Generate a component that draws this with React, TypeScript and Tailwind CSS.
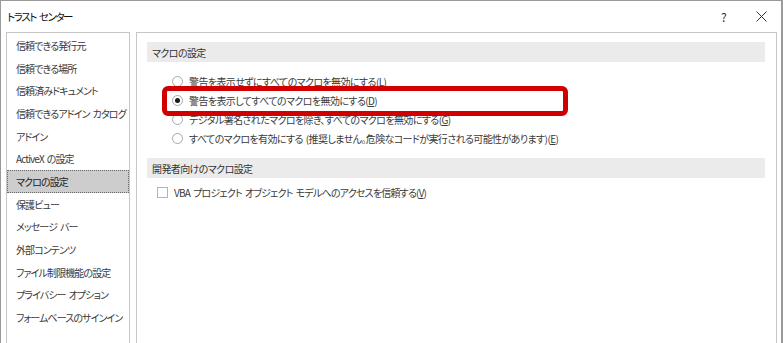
import { Fragment, useState } from 'react';

const NAV = [
  '信頼できる発行元',
  '信頼できる場所',
  '信頼済みドキュメント',
  '信頼できるアドイン カタログ',
  'アドイン',
  'ActiveX の設定',
  'マクロの設定',
  '保護ビュー',
  'メッセージ バー',
  '外部コンテンツ',
  'ファイル制限機能の設定',
  'プライバシー オプション',
  'フォームベースのサインイン',
];

const MACROS = [
  { label: '警告を表示せずにすべてのマクロを無効にする', key: 'L' },
  { label: '警告を表示してすべてのマクロを無効にする', key: 'D' },
  { label: 'デジタル署名されたマクロを除き、すべてのマクロを無効にする', key: 'G' },
  { label: 'すべてのマクロを有効にする (推奨しません。危険なコードが実行される可能性があります)', key: 'E' },
];

const font = "font-['Noto_Sans_CJK_JP','Noto_Sans',sans-serif] [font-feature-settings:'palt']";

// palt + tight tracking eats the spaces, so give them a fixed width
function Spaced({ text }: { text: string }) {
  const parts = text.split(' ');
  return (
    <>
      {parts.map((p, i) => (
        <Fragment key={i}>
          {i > 0 && <span className="inline-block w-[3px]" />}
          {p}
        </Fragment>
      ))}
    </>
  );
}

function Radio({ checked }: { checked: boolean }) {
  return (
    <span className="flex h-[11px] w-[11px] shrink-0 items-center justify-center rounded-full border border-[#a8a8a8] bg-white">
      {checked && <span className="h-[5px] w-[5px] rounded-full bg-[#1a1a1a]" />}
    </span>
  );
}

export default function App() {
  const [sel, setSel] = useState(1);
  const [vba, setVba] = useState(false);

  return (
    <div className={`${font} relative h-[343px] w-[783px] overflow-hidden whitespace-pre border-l border-r-2 border-t border-[#9a9a9a] bg-white text-[10px] tracking-[-0.6px] text-[#3a3a3a]`}>
      {/* title bar */}
      <div className="flex h-[31px] items-center justify-between pl-[6px] pr-[14px]">
        <span className="text-[10.5px] tracking-[-1.4px] text-[#111]">
          <Spaced text="トラスト センター" />
        </span>
        <div className="flex items-center gap-[30px] text-[#333]">
          <span className="text-[12px]">?</span>
          <svg width="11" height="11" viewBox="0 0 11 11" className="stroke-[#333]">
            <path d="M0.5 0.5 L10.5 10.5 M10.5 0.5 L0.5 10.5" strokeWidth="1" />
          </svg>
        </div>
      </div>

      <div className="flex h-[320px] gap-[6px] pl-[5px] pr-[4px]">
        {/* nav */}
        <div className="w-[124px] border border-[#c6c6c6] pt-[1px] tracking-[-0.9px]">
          {NAV.map((n, i) => (
            <div
              key={n}
              className={
                i === 6
                  ? 'flex h-[22.7px] items-center border border-dotted border-[#666] bg-[#cdcdcd] pl-[8px] text-[#222]'
                  : 'flex h-[22.7px] items-center pl-[9px]'
              }
            >
              <span>
                <Spaced text={n} />
              </span>
            </div>
          ))}
        </div>

        {/* content */}
        <div className="flex-1 border border-[#c6c6c6] pl-[10px] pr-[11px] pt-[9px]">
          <div className="flex h-[20px] items-center bg-[#ebebeb] pl-[5px] text-[#333]">マクロの設定</div>
          <div className="mt-[10px] pl-[25px]">
            {MACROS.map((m, i) => (
              <label key={m.key} className="flex h-[19px] cursor-default items-center gap-[6px]" onClick={() => setSel(i)}>
                <Radio checked={sel === i} />
                <span>
                  <Spaced text={m.label} />(<span className="underline">{m.key}</span>)
                </span>
              </label>
            ))}
          </div>
          <div className="mt-[10px] flex h-[20px] items-center bg-[#ebebeb] pl-[5px] text-[#333]">開発者向けのマクロ設定</div>
          <label className="mt-[5px] flex h-[19px] items-center gap-[6px] pl-[10px]" onClick={() => setVba(!vba)}>
            <span className="h-[11px] w-[11px] shrink-0 border border-[#b4b4b4] bg-white" />
            <span className="tracking-[-0.8px]">
              <Spaced text="VBA プロジェクト オブジェクト モデルへのアクセスを信頼する" />(<span className="underline">V</span>)
            </span>
          </label>
        </div>
      </div>

      {/* highlight */}
      <div className="absolute left-[161px] top-[85px] h-[30px] w-[406px] rounded-[6px] border-[5px] border-[#d00000]" />
    </div>
  );
}
